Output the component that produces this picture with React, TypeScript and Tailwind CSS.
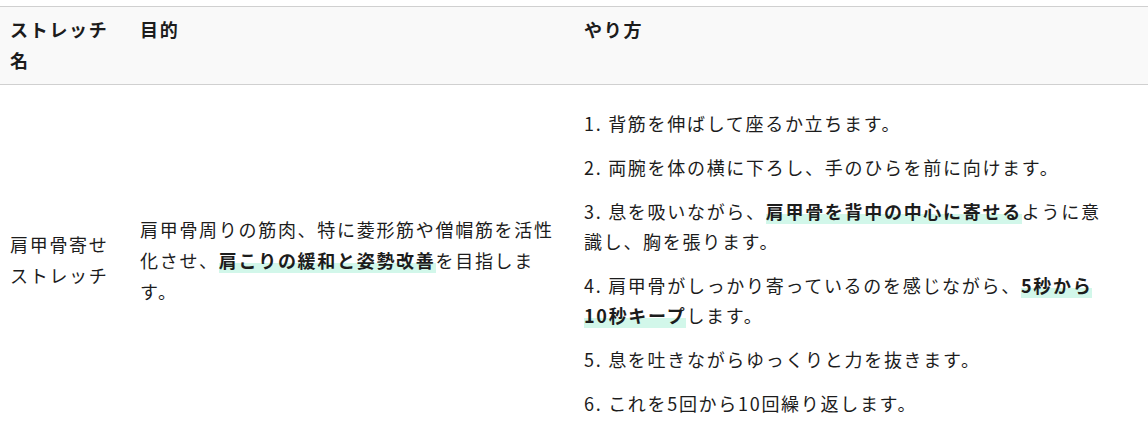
import React from "react";

// Stretch guide table: one header row and one stretch entry.

const steps: React.ReactNode[] = [
  "1. 背筋を伸ばして座るか立ちます。",
  "2. 両腕を体の横に下ろし、手のひらを前に向けます。",
  <>
    3. 息を吸いながら、<Mark>肩甲骨を背中の中心に寄せる</Mark>ように意識し、胸を張ります。
  </>,
  <>
    4. 肩甲骨がしっかり寄っているのを感じながら、<Mark>5秒から10秒キープ</Mark>します。
  </>,
  "5. 息を吐きながらゆっくりと力を抜きます。",
  "6. これを5回から10回繰り返します。",
];

function Mark({ children }: { children: React.ReactNode }) {
  return (
    <strong className="font-bold bg-[linear-gradient(transparent_62%,#d2f7ea_62%)]">
      {children}
    </strong>
  );
}

export default function App() {
  return (
    <div className="min-h-[424px] bg-white pt-[6px] font-['Noto_Sans_CJK_JP','Noto_Sans',sans-serif] text-[18px] tracking-[1.7px] text-[#1c1c1c]">
      {/* header row */}
      <div className="flex border-y border-[#d0d0d0] bg-[#f9f9f9] font-bold leading-[31px]">
        <div className="w-[130px] shrink-0 px-[10px] pt-[7px] pb-[8px]">ストレッチ名</div>
        <div className="w-[444px] shrink-0 px-[10px] pt-[7px]">目的</div>
        <div className="flex-1 px-[10px] pt-[7px]">やり方</div>
      </div>

      {/* body row */}
      <div className="flex items-center">
        <div className="w-[130px] shrink-0 px-[10px] leading-[31px]">肩甲骨寄せストレッチ</div>
        <div className="w-[444px] shrink-0 px-[10px] leading-[31px]">
          肩甲骨周りの筋肉、特に菱形筋や僧帽筋を活性化させ、<Mark>肩こりの緩和と姿勢改善</Mark>を目指します。
        </div>
        <div className="w-[544px] shrink-0 px-[10px] pt-[23px] pb-[17px] leading-[30px]">
          <div className="flex flex-col gap-[14px]">
            {steps.map((s, i) => (
              <p key={i}>{s}</p>
            ))}
          </div>
        </div>
      </div>
    </div>
  );
}
